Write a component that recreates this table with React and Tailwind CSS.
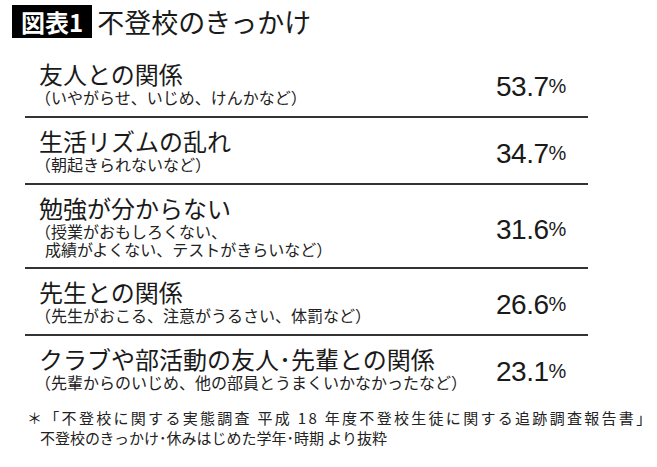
import React from 'react';

const rows = [
  { title: '友人との関係', notes: ['（いやがらせ、いじめ、けんかなど）'], value: '53.7' },
  { title: '生活リズムの乱れ', notes: ['（朝起きられないなど）'], value: '34.7' },
  { title: '勉強が分からない', notes: ['（授業がおもしろくない、', '成績がよくない、テストがきらいなど）'], value: '31.6' },
  { title: '先生との関係', notes: ['（先生がおこる、注意がうるさい、体罰など）'], value: '26.6' },
  { title: 'クラブや部活動の友人･先輩との関係', notes: ['（先輩からのいじめ、他の部員とうまくいかなかったなど）'], value: '23.1' },
];

const jp = "font-['Noto_Sans_CJK_JP',sans-serif]";

const App = () => {
  return (
    <div className={`w-[657px] h-[467px] bg-white text-[#1a1a1a] overflow-hidden ${jp}`}>
      {/* heading */}
      <div className="flex items-center pt-[5px] pl-[12px]">
        <div className="h-[33px] px-[9px] bg-black text-white text-[24px] leading-[33px] font-bold flex items-center">
          図表1
        </div>
        <div className="ml-[5px] text-[27px] leading-[33px]">不登校のきっかけ</div>
      </div>

      {/* list */}
      <div className="ml-[25px] w-[563px] mt-[13px]">
        {rows.map((row, i) => (
          <div
            key={row.value}
            className={`flex pl-[14px] pt-[9px] ${i < rows.length - 1 ? 'border-b-2 border-[#333] pb-[9px]' : 'pb-[4px]'}`}
          >
            <div className="flex-1">
              <div className="text-[24px] leading-[28px]">{row.title}</div>
              {row.notes.map((n, j) => (
                <div
                  key={n}
                  className={`text-[16px] text-[#222] -ml-[4px] ${row.notes.length > 1 ? 'leading-[18px]' : 'leading-[19px]'} ${j > 0 ? 'pl-[10px]' : ''}`}
                >
                  {n}
                </div>
              ))}
            </div>
            <div className="w-[92px] self-center mt-[6px] font-['Liberation_Sans',Arial,sans-serif] text-[28px] leading-[30px] tracking-[-0.5px]">
              {row.value}
              <span className="text-[20px] align-[3px]">%</span>
            </div>
          </div>
        ))}
      </div>

      {/* source */}
      <div className="ml-[27px] mt-[12px] text-[15px] leading-[20px] text-[#222]">
        <div className="tracking-[2.3px] whitespace-nowrap">＊「不登校に関する実態調査 平成 18 年度不登校生徒に関する追跡調査報告書」</div>
        <div className="pl-[13px]">不登校のきっかけ･休みはじめた学年･時期 より抜粋</div>
      </div>
    </div>
  );
};

export default App;
